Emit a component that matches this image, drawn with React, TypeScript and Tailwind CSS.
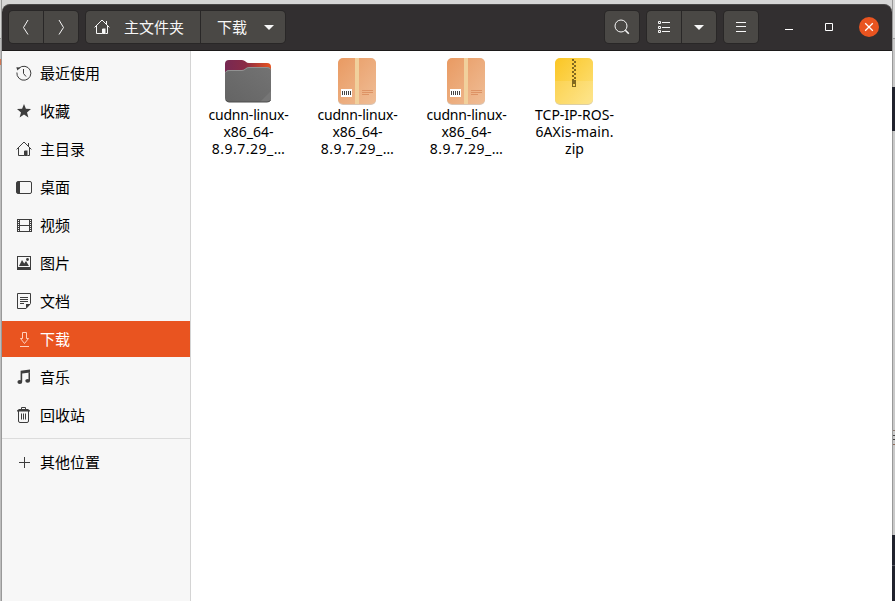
import type { ReactNode } from "react"
import clsx from "clsx"

const HomeIcon = () => (
  <svg className="w-4 h-4 shrink-0" viewBox="0 0 16 16" fill="none" stroke="currentColor">
    <path d="M.6 8.4 8 1l7.4 7.4" />
    <path d="M2.5 7v7.5h6V10M13.5 7v7.5h-2" />
    <path d="M12.5 2v3" />
    <path d="M8.5 9.5h3V15h-3z" fill="currentColor" stroke="none" />
  </svg>
)

const RecentIcon = () => (
  <svg className="w-4 h-4" viewBox="0 0 16 16" fill="none" stroke="currentColor">
    <path d="M3 3.2A7 7 0 1 1 .9 7.5" />
    <path d="M.3 2.2l4.2.2L1.4 5.6z" fill="currentColor" stroke="none" />
    <path d="M7.5 4v4.5l2.5 3" />
  </svg>
)

const StarIcon = () => (
  <svg className="w-4 h-4" viewBox="0 0 16 16" fill="currentColor">
    <path d="M8 1l1.9 4.8 5.1.3-4 3.3 1.4 5L8 11.6l-4.4 2.8 1.4-5L1 6.1l5.1-.3z" />
  </svg>
)

const DesktopIcon = () => (
  <svg className="w-4 h-4" viewBox="0 0 16 16" fill="none" stroke="currentColor">
    <rect x=".5" y="2.5" width="15" height="12" rx="1.5" />
    <path d="M1 3h3v11H1z" fill="currentColor" stroke="none" />
  </svg>
)

const VideoIcon = () => (
  <svg className="w-4 h-4" viewBox="0 0 16 16" fill="none" stroke="currentColor">
    <path d="M3.5 2v13M13.5 2v13M3 2.5h11M3 8.5h11M3 14.5h11" />
    <path d="M1.5 2v13M15.5 2v13" />
    <path d="M2.5 2v13M14.5 2v13" strokeDasharray="1 1" />
  </svg>
)

const PictureIcon = () => (
  <svg className="w-4 h-4" viewBox="0 0 16 16" fill="currentColor">
    <path d="M1 1h14v14H1zm1 1v10h12V2z" fillRule="evenodd" />
    <path d="M3 11l3-6 2.2 3.5L10 6l3 5z" />
    <circle cx="11.5" cy="4.5" r="1.4" />
  </svg>
)

const DocumentIcon = () => (
  <svg className="w-4 h-4" viewBox="0 0 16 16" fill="none" stroke="currentColor">
    <path d="M1.5.5h13v10l-4.5 5h-8.5z" />
    <path d="M4 4.5h8M4 6.5h8M4 8.5h8M4 10.5h4" />
    <path d="M10 15.5v-4.5h4.5z" fill="currentColor" stroke="none" />
  </svg>
)

const DownloadIcon = () => (
  <svg className="w-4 h-4" viewBox="0 0 16 16" fill="none" stroke="currentColor">
    <path d="M6.5 1.5h4v6h2l-4 5-4-5h2z" />
    <path d="M4 15.5h9" />
  </svg>
)

const MusicIcon = () => (
  <svg className="w-4 h-4" viewBox="0 0 16 16" fill="currentColor">
    <path d="M4.6 1.7 14 .5v3L6.2 4.6v8.2H4.6zM12.5 3H14v8.5h-1.5z" />
    <ellipse cx="3.8" cy="13" rx="2.4" ry="1.9" />
    <ellipse cx="11.7" cy="11.8" rx="2.4" ry="1.9" />
  </svg>
)

const TrashIcon = () => (
  <svg className="w-4 h-4" viewBox="0 0 16 16" fill="none" stroke="currentColor">
    <path d="M5.5 2.5v-2h4v2" />
    <path d="M1 4.500V3.500L3 2h9l2 1.500v1z" fill="currentColor" stroke="none" />
    <path d="M2.5 4v10q0 1.500 1.500 1.500h7q1.500 0 1.500-1.500V4M5.500 6.500v6M7.500 6.500v6M9.500 6.500v6" />
  </svg>
)

const PlusIcon = () => (
  <svg className="w-4 h-4" viewBox="0 0 16 16" fill="none" stroke="currentColor">
    <path d="M3 8.5h11M8.5 3v11" />
  </svg>
)

const CaretIcon = () => (
  <svg className="w-4 h-4 shrink-0" viewBox="0 0 16 16" fill="currentColor">
    <path d="M3 6h10l-5 5z" />
  </svg>
)

const FolderIcon = () => (
  <svg width="48" height="48" viewBox="0 0 48 48">
    <defs>
      <linearGradient id="folderBack">
        <stop offset="0" stopColor="#772953" />
        <stop offset=".45" stopColor="#8a2b45" />
        <stop offset="1" stopColor="#e95420" />
      </linearGradient>
      <linearGradient id="folderFront" x1="0" y1="1" x2="1" y2="0">
        <stop offset="0" stopColor="#646464" />
        <stop offset="1" stopColor="#737373" />
      </linearGradient>
    </defs>
    <path d="M1 6q0-4 4-4h13q2 0 3.5 1.5T25 5h18q4 0 4 4v15H1z" fill="url(#folderBack)" />
    <path d="M1 16q0-4 4-4h13q2 0 3.5-1.5T25 9h18q4 0 4 4v27q0 4-4 4H5q-4 0-4-4z" fill="url(#folderFront)" />
    <path d="M1.5 14.5q1-2 3.5-2h13q2 0 3.5-1.5T25 9.5h18q3 0 3.6 2" fill="none" stroke="#929292" />
    <path d="M47 33v7q0 4-4 4h-7z" fill="#767676" />
    <path d="M2 42q1 2 3 2h38q3 0 3.5-2" fill="none" stroke="#4c4c4c" />
  </svg>
)

const PackageIcon = () => (
  <svg width="48" height="48" viewBox="0 0 48 48">
    <defs>
      <linearGradient id="cardboard" x1="0" y1="0" x2="1" y2="1">
        <stop offset="0" stopColor="#e99a62" />
        <stop offset="1" stopColor="#efbd96" />
      </linearGradient>
    </defs>
    <rect x="5" y="1" width="38" height="46" rx="5" fill="#d9c5b5" />
    <rect x="5" y="0" width="38" height="46" rx="5" fill="url(#cardboard)" />
    <path d="M22 0h4v46h-4z" fill="#f1d09c" />
    <path d="M8 31h11v8H8z" fill="#fff" />
    <path d="M9.5 33v4M11.5 33v4M13.5 33v4M15.5 33v4M17.5 33v4" stroke="#444" />
    <path d="M29 32.5h11M29 34.5h11M29 36.5h7" stroke="#dd9365" />
  </svg>
)

const ZipIcon = () => (
  <svg width="48" height="48" viewBox="0 0 48 48">
    <defs>
      <linearGradient id="zipBody" x1="0" y1="0" x2="1" y2="1">
        <stop offset="0" stopColor="#fbc624" />
        <stop offset="1" stopColor="#fde27e" />
      </linearGradient>
    </defs>
    <rect x="5" y="1" width="38" height="46" rx="5" fill="#ddcfa4" />
    <rect x="5" y="0" width="38" height="46" rx="5" fill="url(#zipBody)" />
    <path d="M5 23h38v18q0 5-5 5H10q-5 0-5-5z" fill="#fff" opacity=".12" />
    <path d="M23 1v21" stroke="#82691f" strokeWidth="2" strokeDasharray="2 2" />
    <path d="M25 3v19" stroke="#82691f" strokeWidth="2" strokeDasharray="2 2" />
    <path d="M22 22h4v7h-4z" fill="#82691f" />
    <path d="M23 26h2v2h-2z" fill="#fcd552" />
  </svg>
)

const places = [
  { name: "最近使用", icon: RecentIcon },
  { name: "收藏", icon: StarIcon },
  { name: "主目录", icon: HomeIcon },
  { name: "桌面", icon: DesktopIcon },
  { name: "视频", icon: VideoIcon },
  { name: "图片", icon: PictureIcon },
  { name: "文档", icon: DocumentIcon },
  { name: "下载", icon: DownloadIcon },
  { name: "音乐", icon: MusicIcon },
  { name: "回收站", icon: TrashIcon },
]

const cudnnLines = [
  { text: "cudnn-linux-", tracking: "tracking-[-0.17px]" },
  { text: "x86_64-", tracking: "tracking-normal" },
  { text: "8.9.7.29_…", tracking: "tracking-[0.5px]" },
]

const zipLines = [
  { text: "TCP-IP-ROS-", tracking: "tracking-normal" },
  { text: "6AXis-main.", tracking: "tracking-[0.1px]" },
  { text: "zip", tracking: "tracking-normal" },
]

const files = [
  { id: 1, lines: cudnnLines, icon: FolderIcon },
  { id: 2, lines: cudnnLines, icon: PackageIcon },
  { id: 3, lines: cudnnLines, icon: PackageIcon },
  { id: 4, lines: zipLines, icon: ZipIcon },
]

function HeaderButton({ className, children }: { className?: string; children: ReactNode }) {
  return (
    <button className={clsx("h-8 flex items-center bg-[#4a4845] text-[#f7f7f7]", className)}>
      {children}
    </button>
  )
}

function HeaderBar() {
  return (
    <header className="h-[47px] shrink-0 flex items-start pt-1.5 pl-[7px] pr-[13px] bg-[#322f30] border-t border-[#4b4949] border-b border-b-[#1c1a1a] rounded-t-lg">
      <div className="flex gap-px rounded shadow-[0_0_0_1px_#292727] bg-[#292727]">
        <HeaderButton className="w-[34px] justify-center rounded-l">
          <svg className="w-4 h-4" viewBox="0 0 16 16" fill="none" stroke="currentColor">
            <path d="M10 1 5.5 8.5l4.5 7" />
          </svg>
        </HeaderButton>
        <HeaderButton className="w-[34px] justify-center rounded-r">
          <svg className="w-4 h-4" viewBox="0 0 16 16" fill="none" stroke="currentColor">
            <path d="M6 1l4.5 7.5L6 15.5" />
          </svg>
        </HeaderButton>
      </div>

      <div className="flex gap-px ml-2 rounded shadow-[0_0_0_1px_#292727] bg-[#292727]">
        <HeaderButton className="w-[114px] pl-2 gap-3.5 rounded-l">
          <HomeIcon />
          <span className="text-[15px] leading-5">主文件夹</span>
        </HeaderButton>
        <HeaderButton className="w-[84px] pl-4 gap-3.5 rounded-r">
          <span className="text-[15px] leading-5">下载</span>
          <CaretIcon />
        </HeaderButton>
      </div>

      <div className="flex-1" />

      <HeaderButton className="w-[34px] justify-center rounded shadow-[0_0_0_1px_#292727]">
        <svg className="w-4 h-4" viewBox="0 0 16 16" fill="none" stroke="currentColor">
          <circle cx="7" cy="7" r="6" />
          <path d="M11.3 11.3l3.5 3.5" strokeWidth="1.6" />
        </svg>
      </HeaderButton>

      <div className="flex gap-px ml-2 rounded shadow-[0_0_0_1px_#292727] bg-[#292727]">
        <HeaderButton className="w-[34px] justify-center rounded-l">
          <svg className="w-4 h-4" viewBox="0 0 16 16" fill="none" stroke="currentColor">
            <path d="M2.5 2.5h2v2h-2zM2.5 7.5h2v2h-2zM2.5 11.5h2v2h-2zM6 3.5h8M6 8.5h8M6 12.5h8" />
          </svg>
        </HeaderButton>
        <HeaderButton className="w-[34px] justify-center rounded-r">
          <CaretIcon />
        </HeaderButton>
      </div>

      <HeaderButton className="w-[34px] justify-center ml-2 rounded shadow-[0_0_0_1px_#292727]">
        <svg className="w-4 h-4" viewBox="0 0 16 16" fill="none" stroke="currentColor">
          <path d="M3 3.5h10M3 7.5h10M3 12.5h10" />
        </svg>
      </HeaderButton>

      {/* Window controls */}
      <div className="h-8 ml-[21px] flex items-center gap-5 text-white">
        <svg className="w-5 h-5" viewBox="0 0 20 20" stroke="currentColor">
          <path d="M6 12.5h8" />
        </svg>
        <svg className="w-5 h-5" viewBox="0 0 20 20" fill="none" stroke="currentColor">
          <path d="M6.5 6.5h7v7h-7z" />
        </svg>
        <svg className="w-5 h-5" viewBox="0 0 20 20" stroke="currentColor">
          <circle cx="10" cy="10" r="10" fill="#e95420" stroke="none" />
          <path d="M6.2 6.2l7.6 7.6M13.8 6.2l-7.6 7.6" strokeWidth="1.3" />
        </svg>
      </div>
    </header>
  )
}

function Sidebar() {
  return (
    <aside className="w-[189px] shrink-0 pt-1 bg-[#f7f7f7] border-r border-[#d4d4d4] text-[15px] leading-5">
      <ul className="space-y-0.5">
        {places.map((place) => (
          <li
            key={place.name}
            className={clsx(
              "h-9 flex items-center pl-3.5 gap-2",
              place.name === "下载" ? "bg-[#e95420] text-[#ffcfbc]" : "text-[#3d3d3d]",
            )}
          >
            <place.icon />
            <span className={place.name === "下载" ? "text-white" : "text-black"}>{place.name}</span>
          </li>
        ))}
      </ul>
      <div className="mt-[5px] mb-[5px] h-px bg-[#dcdcdc]" />
      <div className="h-9 flex items-center pl-3.5 gap-2 text-[#3d3d3d]">
        <PlusIcon />
        <span className="text-black">其他位置</span>
      </div>
    </aside>
  )
}

// Slice of the desktop that shows beside the window
function DesktopEdge() {
  return (
    <div className="w-[3px] h-[601px] shrink-0 flex flex-col bg-[#c9c9c9] border-l border-[#999]">
      <div className="h-[38px] bg-[#d8d8d8]" />
      <div className="h-px bg-[#999]" />
      <div className="h-12" />
      <div className="h-11 bg-[#20222d] -ml-px" />
      <div className="h-[299px]" />
      <div className="h-[15px] flex flex-col justify-between">
        <div className="h-px bg-[#8d7a70]" />
        <div className="h-px bg-[#444]" />
        <div className="h-px bg-[#444]" />
        <div className="h-px bg-[#8d6a58]" />
      </div>
      <div className="h-[90px]" />
      <div className="h-[30px] bg-[#20222d] -ml-px" />
      <div className="h-px bg-[#555761] -ml-px" />
      <div className="flex-1 bg-[#20222d] -ml-px" />
    </div>
  )
}

export default function App() {
  return (
    <div className="w-[895px] h-[601px] overflow-hidden flex bg-[#d6d6d6] font-['Noto_Sans','Noto_Sans_CJK_SC',sans-serif]">
      <div className="w-0.5 shrink-0 pt-[38px] bg-[#d8d8d8] border-r border-[#999]">
        <div className="h-px bg-[#999]" />
        <div className="h-[562px] pt-5 bg-[#bdbdbd]">
          <div className="h-1.5 bg-[#d27652]" />
        </div>
      </div>
      <div className="w-[890px] mt-1 flex flex-col">
        <HeaderBar />
        <div className="flex-1 flex">
          <Sidebar />
          <main className="flex-1 flex items-start pl-0.5 pt-[7px] bg-white">
            {files.map((file) => (
              <div key={file.id} className="w-[109px] last:w-[107px] flex flex-col items-center">
                <file.icon />
                <p className="pl-0.5 text-[14px] leading-[17px] text-center text-black whitespace-nowrap">
                  {file.lines.map((line) => (
                    <span key={line.text} className={clsx("block", line.tracking)}>
                      {line.text}
                    </span>
                  ))}
                </p>
              </div>
            ))}
          </main>
        </div>
      </div>
      <DesktopEdge />
    </div>
  )
}
